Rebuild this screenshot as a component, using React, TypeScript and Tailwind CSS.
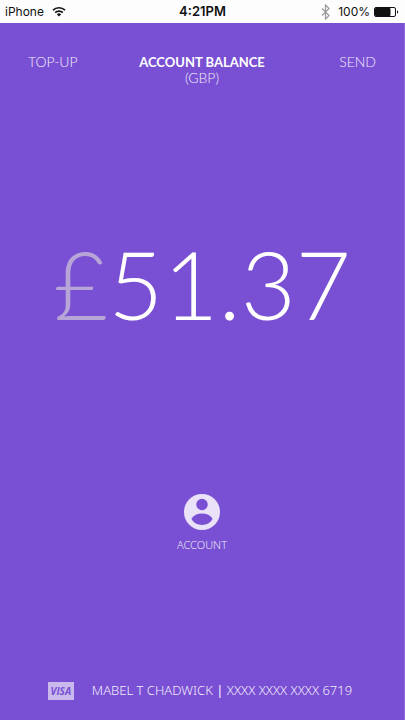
export default function App() {
  return (
    <div className="flex min-h-screen flex-col border-r border-[#8f6bdb] bg-[#794fd3] font-['Lato',sans-serif] text-white">
      <header className="-mr-px flex h-[23px] items-center justify-between bg-[#fdfdfd] px-[5px] font-['Inter','Liberation_Sans',sans-serif] text-xs text-[#111]">
        <div className="flex flex-1 items-center gap-2">
          <span>iPhone</span>
          <svg width="14" height="11" viewBox="0 0 14 11" fill="none" stroke="#111" strokeWidth="1.7">
            <path d="M1 4.2a8.6 8.6 0 0 1 12 0M3.2 6.6a5.4 5.4 0 0 1 7.6 0" />
            <path d="M7 10.4 4.9 8.4a3 3 0 0 1 4.2 0z" fill="#111" stroke="none" />
          </svg>
        </div>
        <span className="text-[13px] font-semibold">4:21PM</span>
        <div className="flex flex-1 items-center justify-end gap-1">
          <svg width="9" height="16" viewBox="0 0 9 16" fill="none" stroke="#999" strokeWidth="1.2" className="mr-1">
            <path d="M1 4.5 8 11.5 4.5 15V1L8 4.5 1 11.5" />
          </svg>
          <span>100%</span>
          <svg width="26" height="10" viewBox="0 0 26 10">
            <rect x="0.5" y="0.5" width="21" height="9" rx="1.5" fill="none" stroke="#111" />
            <rect x="1" y="1" width="15.5" height="8" rx="1" fill="#111" />
            <path d="M23 3.2a2 2 0 0 1 0 3.6z" fill="#111" />
          </svg>
        </div>
      </header>
      <nav className="flex items-start justify-between px-7 pt-[31px] text-sm leading-4">
        <button className="flex-1 text-left font-light opacity-90">TOP-UP</button>
        <h1 className="text-center text-[13px] leading-4 font-bold">
          ACCOUNT BALANCE
          <span className="block text-sm leading-4 font-light opacity-90">(GBP)</span>
        </h1>
        <button className="flex-1 text-right font-light opacity-90">SEND</button>
      </nav>
      <main className="flex flex-1 flex-col items-center">
        <p className="mt-[137px] text-[95px] leading-[120px] font-light">
          <span className="text-[#b6a5d6]">£</span>51.37
        </p>
        <button className="mt-[151px] flex flex-col items-center gap-[7px] font-['Noto_Sans','Open_Sans',sans-serif] text-[11px] leading-4 font-light">
          <svg width="36" height="36" viewBox="0 0 36 36">
            <circle cx="18" cy="18" r="18" fill="#e9e2f8" />
            <circle cx="18" cy="10.5" r="5.7" fill="#794fd3" />
            <path d="M7.4 24.8C9.5 21.2 13.5 19.4 18 19.4s8.5 1.8 10.6 5.4C26.5 28.9 22.5 31 18 31S9.5 28.9 7.4 24.8z" fill="#794fd3" />
          </svg>
          <span className="opacity-85">ACCOUNT</span>
        </button>
      </main>
      <footer className="flex h-[58px] items-center justify-center gap-[18px] pr-1 font-['Noto_Sans','Open_Sans',sans-serif] text-[13px] font-light">
        <span className="flex h-[18px] w-[26px] items-center justify-center bg-[#c9b9ed] font-['Open_Sans',sans-serif] text-[10px] font-bold text-[#794fd3] italic">VISA</span>
        <span className="opacity-90">
          MABEL T CHADWICK <span className="font-medium">|</span> XXXX XXXX XXXX 6719
        </span>
      </footer>
    </div>
  );
}
